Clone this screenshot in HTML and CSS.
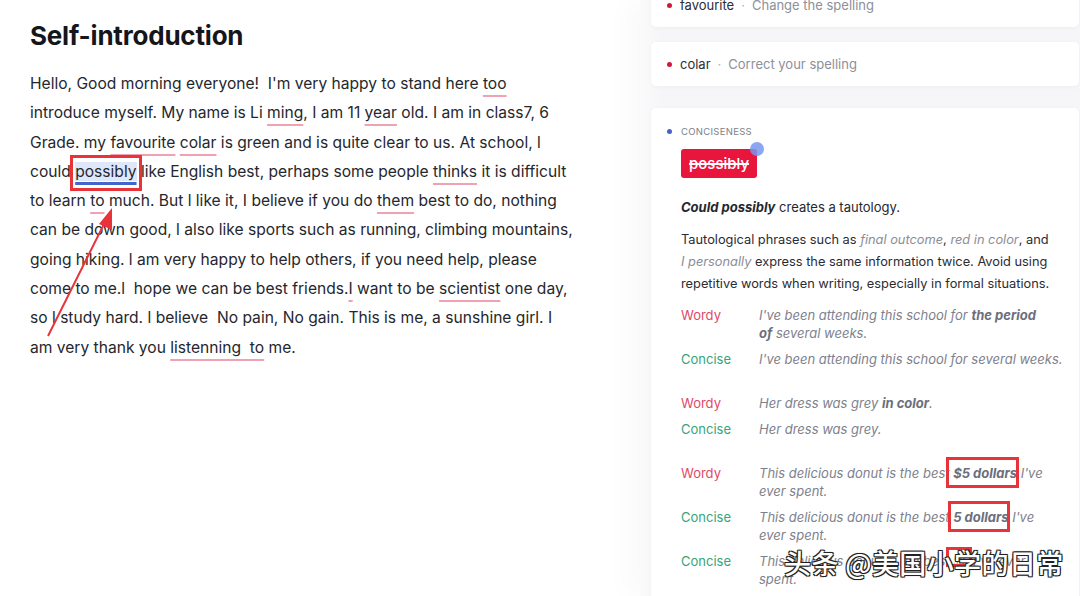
FILE: index.html
```html
<!DOCTYPE html>
<html lang="en">
<head>
    <meta charset="UTF-8">
    <meta name="viewport" content="width=device-width, initial-scale=1.0">
    <title>Self-introduction</title>
    <link rel="stylesheet" href="styles.css">
</head>
<body>
    <div class="page">
        <!-- Document -->
        <div class="editor">
            <h1 class="title">Self-introduction</h1>
            <p class="essay">
                Hello, Good morning everyone!&nbsp; I'm very happy to stand here <span class="err">too</span><br>
                introduce myself. My name is Li <span class="err">ming</span>, I am 11 <span class="err">year</span> old. I am in class7, 6<br>
                Grade. my <span class="err">favourite</span> <span class="err">colar</span> is green and is quite clear to us. At school, l<br>
                could <span class="active">possibly</span> like English best, perhaps some people <span class="err">thinks</span> it is difficult<br>
                to learn <span class="err">to</span> much. But l like it, I believe if you do <span class="err">them</span> best to do, nothing<br>
                can be down good, l also like sports such as running, climbing mountains,<br>
                going hiking. l am very happy to help others, if you need help, please<br>
                come to me.l&nbsp; hope we can be best friends.<span class="err">I</span> want to be <span class="err">scientist</span> one day,<br>
                so l study hard. l believe&nbsp; No pain, No gain. This is me, a sunshine girl. I<br>
                am very thank you <span class="err">listenning&nbsp; to</span> me.
            </p>
        </div>

        <!-- Suggestions -->
        <div class="panel">
            <div class="card card-short card-first">
                <span class="dot dot-red"></span>
                <span class="word">favourite</span>
                <span class="sep">·</span>
                <span class="hint">Change the spelling</span>
            </div>
            <div class="card card-short">
                <span class="dot dot-red"></span>
                <span class="word">colar</span>
                <span class="sep">·</span>
                <span class="hint">Correct your spelling</span>
            </div>
            <div class="card card-open">
                <div class="kind"><span class="dot dot-blue"></span>CONCISENESS</div>
                <div class="badge-row">
                    <span class="badge">possibly</span>
                    <span class="badge-pin"></span>
                </div>
                <p class="lead"><b><i>Could possibly</i></b> creates a tautology.</p>
                <p class="explain">
                    Tautological phrases such as <i>final outcome</i>, <i>red in color</i>, and<br>
                    <i>I personally</i> express the same information twice. Avoid using<br>
                    repetitive words when writing, especially in formal situations.
                </p>
                <div class="examples">
                    <div class="ex">
                        <span class="tag wordy">Wordy</span>
                        <span class="sample">I've been attending this school for <b>the period</b><br><b>of</b> several weeks.</span>
                    </div>
                    <div class="ex">
                        <span class="tag concise">Concise</span>
                        <span class="sample">I've been attending this school for several weeks.</span>
                    </div>
                    <div class="ex group">
                        <span class="tag wordy">Wordy</span>
                        <span class="sample">Her dress was grey <b>in color</b>.</span>
                    </div>
                    <div class="ex">
                        <span class="tag concise">Concise</span>
                        <span class="sample">Her dress was grey.</span>
                    </div>
                    <div class="ex group">
                        <span class="tag wordy">Wordy</span>
                        <span class="sample">This delicious donut is the best <b>$5 dollars</b> I've<br>ever spent.</span>
                    </div>
                    <div class="ex">
                        <span class="tag concise">Concise</span>
                        <span class="sample">This delicious donut is the best <b>5 dollars</b> I've<br>ever spent.</span>
                    </div>
                    <div class="ex">
                        <span class="tag concise">Concise</span>
                        <span class="sample">This delicious donut is the best $5 I've ever<br>spent.</span>
                    </div>
                </div>
            </div>
        </div>

        <!-- Annotations drawn over the screenshot -->
        <div class="mark mark-possibly"></div>
        <div class="mark mark-five-dollars"></div>
        <div class="mark mark-dollars"></div>
        <div class="mark mark-small"></div>
        <svg class="arrow" width="120" height="160" viewBox="0 0 120 160">
            <line x1="6" y1="150" x2="64" y2="34" stroke="#e8333a" stroke-width="2"/>
            <polygon points="70,22 70,44 57,38" fill="#e8333a"/>
        </svg>
        <div class="watermark">头条 @美国小学的日常</div>
    </div>
</body>
</html>
```

FILE: styles.css
```css
body {
    margin: 0;
    font-family: Inter, "Noto Sans", sans-serif;
    background: #fff;
    color: #23252c;
}

.page {
    position: relative;
    display: flex;
    width: 1080px;
    height: 596px;
    overflow: hidden;
}

/* Left: the document */
.editor {
    width: 640px;
    flex-shrink: 0;
    padding: 20px 0 0 30px;
    box-sizing: border-box;
}

.title {
    margin: 0;
    font-size: 26px;
    font-weight: 700;
    color: #14161b;
    letter-spacing: -0.2px;
}

.essay {
    margin: 18px 0 0;
    font-size: 15.6px;
    line-height: 29.3px;
    white-space: nowrap;
    color: #25272e;
}

.err {
    text-decoration: underline;
    text-decoration-color: #f0a2b2;
    text-decoration-thickness: 2px;
    text-underline-offset: 6px;
}

.active {
    background: #dfe7fb;
    text-decoration: underline;
    text-decoration-color: #4466cc;
    text-decoration-thickness: 3px;
    text-underline-offset: 5px;
}

/* Right: suggestions panel */
.panel {
    flex: 1;
    padding: 0 4px 0 11px;
    background: linear-gradient(to right, #fbfbfc 0, #f6f6f8 20px);
    box-shadow: -14px 0 24px rgba(0, 0, 0, 0.025);
}

.card {
    background: #fff;
    border-radius: 5px;
    box-shadow: 0 1px 4px rgba(0, 0, 0, 0.04);
}

.card-short {
    display: flex;
    align-items: center;
    height: 44px;
    padding-left: 16px;
    font-size: 13px;
}

.card-first {
    margin-top: -17px;
    margin-bottom: 15px;
}

.dot {
    display: inline-block;
    width: 5px;
    height: 5px;
    border-radius: 50%;
    margin-right: 8px;
}

.dot-red { background: #d3193b; }
.dot-blue { background: #4762c9; margin-right: 9px; }

.word { color: #2b2d33; }
.sep { color: #b0b2b8; margin: 0 7px; }
.hint { color: #8d9099; }

.card-open {
    margin-top: 22px;
    padding: 18px 16px 0 16px;
    height: 520px;
}

.kind {
    display: flex;
    align-items: center;
    font-size: 9.5px;
    letter-spacing: 0.3px;
    color: #7c808b;
}

.badge-row {
    position: relative;
    display: inline-block;
    margin: 12px 0 0 14px;
}

.badge {
    display: inline-block;
    padding: 0 8px;
    height: 29px;
    line-height: 29px;
    border-radius: 3px;
    background: #e8163c;
    color: #fff;
    font-size: 15px;
    font-weight: 500;
    text-decoration: line-through;
    text-decoration-thickness: 1.5px;
}

.badge-pin {
    position: absolute;
    top: -7px;
    right: -7px;
    width: 14px;
    height: 14px;
    border-radius: 50%;
    background: rgba(120, 150, 240, 0.85);
}

.lead {
    margin: 21px 0 0 14px;
    font-size: 13px;
    color: #25272e;
}

.explain {
    margin: 14px 0 0 14px;
    font-size: 12.8px;
    line-height: 22px;
    color: #2a2c33;
}

.explain i { color: #8a8d96; }

.examples {
    margin: 11px 0 0 14px;
    font-size: 13px;
    line-height: 18px;
}

.ex {
    display: flex;
    margin-top: 8px;
}

.ex:first-child { margin-top: 0; }
.ex.group { margin-top: 26px; }

.tag {
    width: 78px;
    flex-shrink: 0;
}

.wordy { color: #e04a66; }
.concise { color: #37a47c; }

.sample {
    font-style: italic;
    color: #7e818d;
    white-space: nowrap;
}

.sample b { color: #6b6e7c; }

/* Annotations */
.mark {
    position: absolute;
    border: 3px solid #e8333a;
    box-sizing: border-box;
}

.mark-possibly { left: 70px; top: 155px; width: 72px; height: 36px; }
.mark-five-dollars { left: 946px; top: 457px; width: 73px; height: 31px; }
.mark-dollars { left: 948px; top: 501px; width: 62px; height: 31px; }
.mark-small { left: 946px; top: 547px; width: 26px; height: 20px; }

.arrow {
    position: absolute;
    left: 42px;
    top: 186px;
}

.watermark {
    position: absolute;
    left: 784px;
    top: 543px;
    font-family: "Noto Sans CJK SC", sans-serif;
    font-size: 27px;
    font-weight: 500;
    color: #fff;
    letter-spacing: 0.4px;
    text-shadow: -1px -1px 0 #222, 1px -1px 0 #222, -1px 1px 0 #222, 1px 1px 0 #222, 0 0 2px #000;
}
```
